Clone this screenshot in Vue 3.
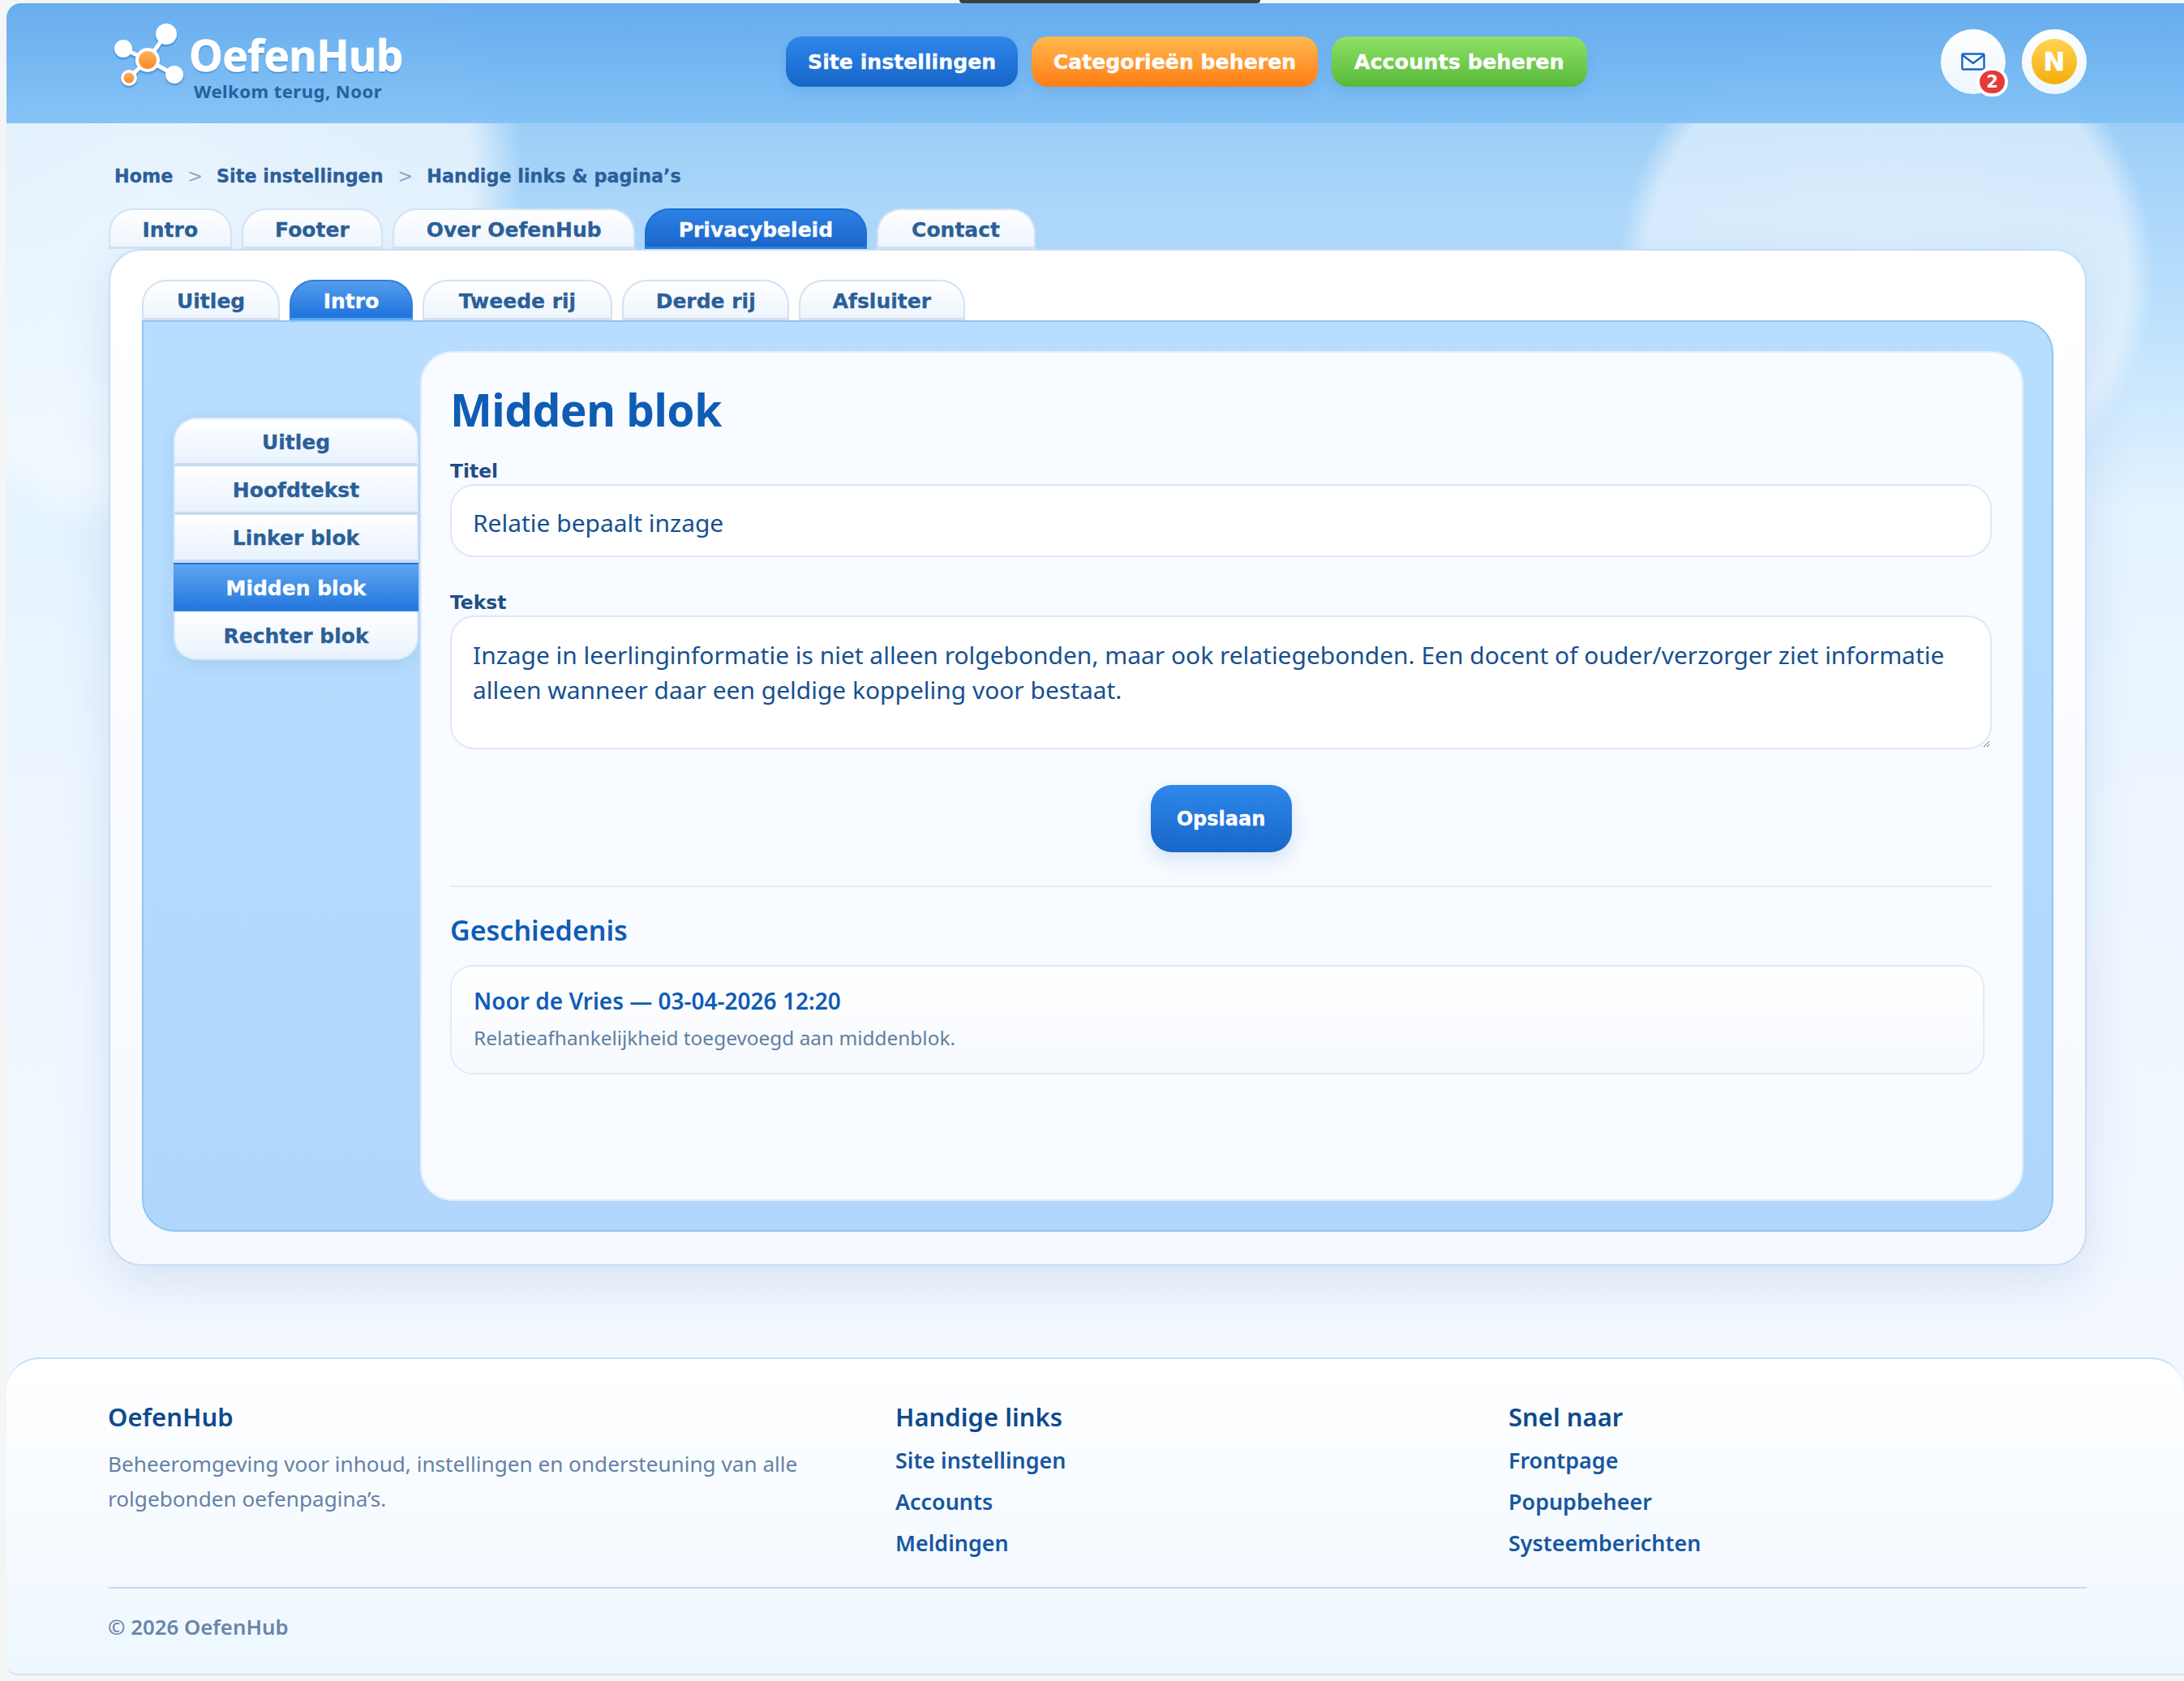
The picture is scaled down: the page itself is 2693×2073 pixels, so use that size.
<template>
  <div class="notch"></div>
  <div class="page">
    <header class="topbar">
      <div class="brand">
        <svg class="logo" viewBox="0 0 90 90" width="90" height="90">
          <g class="logo-lines" stroke="#fff" stroke-width="5">
            <line x1="42" y1="50" x2="65" y2="18" />
            <line x1="42" y1="50" x2="12" y2="36" />
            <line x1="42" y1="50" x2="19" y2="72" />
            <line x1="42" y1="50" x2="75" y2="68" />
          </g>
          <circle cx="65" cy="18" r="13" fill="#fff" />
          <circle cx="12" cy="36" r="11" fill="#fff" />
          <circle cx="75" cy="68" r="11" fill="#fff" />
          <circle cx="42" cy="50" r="15" fill="#fff" />
          <circle cx="42" cy="50" r="11" fill="url(#oranje)" />
          <circle cx="19" cy="72" r="10" fill="#fff" />
          <circle cx="19" cy="72" r="6.5" fill="url(#oranje)" />
          <defs>
            <linearGradient id="oranje" x1="0" y1="0" x2="0" y2="1">
              <stop offset="0" stop-color="#ffb25c" />
              <stop offset="1" stop-color="#f98a24" />
            </linearGradient>
          </defs>
        </svg>
        <div class="brand-text">
          <div class="brand-name">OefenHub</div>
          <div class="brand-sub">Welkom terug, Noor</div>
        </div>
      </div>

      <nav class="mainnav">
        <a v-for="b in navButtons" :key="b.label" class="navbtn" :class="b.kind">{{ b.label }}</a>
      </nav>

      <div class="userbox">
        <div class="roundbtn">
          <svg width="30" height="22" viewBox="0 0 30 22" fill="none" stroke="#1766c2" stroke-width="2.4">
            <rect x="1.5" y="1.5" width="27" height="19" rx="1.5" />
            <path d="M2 3l13 10L28 3" />
          </svg>
          <span class="badge">2</span>
        </div>
        <div class="roundbtn">
          <span class="avatar">N</span>
        </div>
      </div>
    </header>

    <main class="content">
      <div class="crumbs">
        <a>Home</a>
        <span class="sep">&gt;</span>
        <a>Site instellingen</a>
        <span class="sep">&gt;</span>
        <a>Handige links &amp; pagina’s</a>
      </div>

      <div class="tabs toptabs">
        <button v-for="t in topTabs" :key="t" class="tab" :class="{ 'tab-strong': t === 'Privacybeleid' }">{{ t }}</button>
      </div>

      <section class="card">
        <div class="tabs subtabs">
          <button v-for="t in subTabs" :key="t" class="tab" :class="{ 'tab-active': t === 'Intro' }">{{ t }}</button>
        </div>

        <div class="panel">
          <aside class="sidemenu">
            <button v-for="s in sideItems" :key="s" class="sideitem" :class="{ active: s === 'Midden blok' }">{{ s }}</button>
          </aside>

          <div class="editor">
            <h1>Midden blok</h1>

            <label class="field-label">Titel</label>
            <input class="field" type="text" value="Relatie bepaalt inzage" />

            <label class="field-label second">Tekst</label>
            <textarea class="field area" :value="bodyText"></textarea>

            <div class="actions">
              <button class="savebtn">Opslaan</button>
            </div>

            <hr />

            <h2>Geschiedenis</h2>
            <div class="history">
              <div class="history-head">Noor de Vries — 03-04-2026 12:20</div>
              <div class="history-note">Relatieafhankelijkheid toegevoegd aan middenblok.</div>
            </div>
          </div>
        </div>
      </section>
    </main>

    <footer class="foot">
      <div class="foot-cols">
        <div class="foot-about">
          <h3>OefenHub</h3>
          <p>Beheeromgeving voor inhoud, instellingen en ondersteuning van alle rolgebonden oefenpagina’s.</p>
        </div>
        <div class="foot-col" v-for="col in footCols" :key="col.title">
          <h3>{{ col.title }}</h3>
          <a v-for="l in col.links" :key="l">{{ l }}</a>
        </div>
      </div>
      <div class="foot-bottom">© 2026 OefenHub</div>
    </footer>
  </div>
</template>

<script setup>
const navButtons = [
  { label: 'Site instellingen', kind: 'blue' },
  { label: 'Categorieën beheren', kind: 'orange' },
  { label: 'Accounts beheren', kind: 'green' }
]

const topTabs = ['Intro', 'Footer', 'Over OefenHub', 'Privacybeleid', 'Contact']
const subTabs = ['Uitleg', 'Intro', 'Tweede rij', 'Derde rij', 'Afsluiter']
const sideItems = ['Uitleg', 'Hoofdtekst', 'Linker blok', 'Midden blok', 'Rechter blok']

const bodyText = 'Inzage in leerlinginformatie is niet alleen rolgebonden, maar ook relatiegebonden. Een docent of ouder/verzorger ziet informatie alleen wanneer daar een geldige koppeling voor bestaat.'

const footCols = [
  { title: 'Handige links', links: ['Site instellingen', 'Accounts', 'Meldingen'] },
  { title: 'Snel naar', links: ['Frontpage', 'Popupbeheer', 'Systeemberichten'] }
]
</script>

<style>
html, body {
  margin: 0;
  background: #f4f5f6;
}
</style>

<style scoped>
.notch {
  position: absolute;
  left: 1183px;
  top: 0;
  width: 371px;
  height: 4px;
  background: #3c4043;
  border-radius: 0 0 10px 10px;
  z-index: 5;
}

.page {
  position: relative;
  margin: 4px 0 0 8px;
  height: 2062px;
  border-radius: 18px 0 0 14px;
  overflow: hidden;
  font-family: "Noto Sans", sans-serif;
  background:
    radial-gradient(circle 330px at 2318px 332px, rgba(255,255,255,.55) 0, rgba(255,255,255,.5) 90%, rgba(255,255,255,0) 100%),
    radial-gradient(circle 450px at 186px 209px, rgba(255,255,255,.75) 0, rgba(255,255,255,.66) 86%, rgba(255,255,255,0) 100%),
    linear-gradient(180deg, #80bff3 0, #9dcef7 148px, #bfe2fd 400px, #e4f3ff 620px, #eef6ff 1000px, #f3f8ff 1670px);
}

/* topbar */
.topbar {
  height: 148px;
  display: flex;
  align-items: flex-start;
  padding: 0 120px 0 132px;
  box-sizing: border-box;
  background: linear-gradient(180deg, rgba(102,172,237,.98), rgba(128,192,246,.94));
  border-bottom: 1px solid #8cc4f3;
}

.brand {
  display: flex;
  align-items: flex-start;
  width: 829px;
  padding-top: 20px;
}

.logo {
  flex: none;
  filter: drop-shadow(0 2px 1px rgba(38,120,200,.7));
}

.brand-text {
  margin-left: 3px;
}

.brand-name {
  font-size: 53px;
  font-weight: 700;
  line-height: 60px;
  margin-top: 14px;
  color: #fff;
  letter-spacing: -.6px;
  -webkit-text-stroke: .6px #fff;
  text-shadow: 0 2px 1px #3f91d8;
}

.brand-sub {
  margin: 0 0 0 6px;
  font-size: 22.2px;
  font-weight: 700;
  line-height: 30px;
  color: #26609f;
  letter-spacing: .4px;
}

.mainnav {
  display: flex;
  gap: 16.5px;
  margin-top: 41px;
}

.navbtn {
  height: 62px;
  padding: 0 27px;
  border-radius: 20px;
  font: 700 25.2px/63px "DejaVu Sans", sans-serif;
  -webkit-text-stroke: .35px currentColor;
  color: #fff;
  white-space: nowrap;
  box-shadow: 0 6px 14px rgba(40,110,190,.14);
}

.navbtn.blue { background: linear-gradient(180deg, #2f87ea, #1765c9); }
.navbtn.orange { background: linear-gradient(180deg, #ffb84f, #ff7d14); }
.navbtn.green {
  padding: 0 28px;
  font-size: 25.5px;
  background: linear-gradient(180deg, #8ee067, #58b939);
}

.userbox {
  margin-left: auto;
  margin-top: 32px;
  display: flex;
  gap: 20px;
}

.roundbtn {
  position: relative;
  width: 80px;
  height: 80px;
  border-radius: 50%;
  background: linear-gradient(180deg, #fff, #eef6fe);
  display: flex;
  align-items: center;
  justify-content: center;
}

.badge {
  position: absolute;
  left: 44px;
  top: 47px;
  width: 31px;
  height: 28px;
  border: 4px solid #fff;
  border-radius: 18px;
  background: #e53a3c;
  color: #fff;
  font: 700 21px/28px "DejaVu Sans", sans-serif;
  text-align: center;
}

.avatar {
  width: 56px;
  height: 56px;
  border-radius: 50%;
  background: linear-gradient(180deg, #ffd352, #f4ad0c);
  color: #fff;
  font: 700 32px/56px "DejaVu Sans", sans-serif;
  -webkit-text-stroke: .5px currentColor;
  text-align: center;
}

/* main */
.content {
  padding: 0 120px 0 126px;
}

.crumbs {
  display: flex;
  align-items: center;
  height: 40px;
  margin: 45px 0 20px 7px;
  font: 700 22.3px/40px "DejaVu Sans", sans-serif;
  -webkit-text-stroke: .3px currentColor;
  color: #2b5f98;
}

.sep {
  margin: 0 17px 0 18px;
  font-weight: 400;
  -webkit-text-stroke: 0;
  color: #8aa7c6;
}

.tabs {
  display: flex;
  gap: 12px;
}

.tab {
  height: 50px;
  padding: 3px 39.5px 0;
  border: 2px solid #d2e2f3;
  border-bottom: 3px solid #d3e0ef;
  border-radius: 30px 30px 0 0;
  background: linear-gradient(180deg, #fff, #eef5fe);
  font: 700 25px/44px "DejaVu Sans", sans-serif;
  -webkit-text-stroke: .3px currentColor;
  color: #2b5f98;
  white-space: nowrap;
  box-sizing: border-box;
}

.toptabs .tab:last-child {
  padding: 3px 41.5px 0;
}

.subtabs .tab:first-child {
  padding: 3px 41px 0;
}

.subtabs .tab:nth-child(3) {
  padding: 3px 43px 0;
}

.tab-strong {
  border-color: #1c6fd4;
  border-bottom-color: #2a7fe2;
  background: linear-gradient(180deg, #2d82e6, #1a65ca);
  color: #fff;
}

.tab-active {
  border-color: #2f80e2;
  border-bottom-color: #5aa6f0;
  background: linear-gradient(180deg, #539dee, #1f72dc);
  color: #fff;
}

.card {
  padding: 36px 39px 40px;
  border: 2px solid #c7ddf5;
  border-radius: 40px;
  background: linear-gradient(180deg, #fff 0, #f5f9ff 100%);
  box-shadow: 0 20px 60px rgba(60,120,190,.16);
}

.panel {
  display: flex;
  align-items: flex-start;
  gap: 2px;
  padding: 36px 35px 36px 37px;
  border: 2px solid #8ec5f3;
  border-radius: 0 40px 40px 40px;
  background: linear-gradient(180deg, #b8deff, #b0d7fb);
}

.sidemenu {
  flex: none;
  width: 302px;
  margin-top: 82px;
  display: flex;
  flex-direction: column;
  border-radius: 28px;
  box-shadow: 0 4px 20px rgba(60,120,190,.14);
}

.sideitem {
  height: 59.8px;
  padding: 4px 0 0;
  border: 0;
  border-left: 2px solid #dfeaf6;
  border-right: 2px solid #dfeaf6;
  border-bottom: 4px solid #cbdbee;
  background: linear-gradient(180deg, #fff, #e9f3fe);
  font: 700 25px/50px "DejaVu Sans", sans-serif;
  -webkit-text-stroke: .3px currentColor;
  color: #2b5f98;
}

.sideitem:first-child {
  border-top: 2px solid #dfeaf6;
  border-radius: 28px 28px 0 0;
}

.sideitem:last-child {
  border-bottom: 2px solid #dbe7f4;
  border-radius: 0 0 28px 28px;
}

.sideitem.active {
  border: 0;
  border-top: 2px solid #1f72dc;
  border-bottom: 3px solid #2a7fe2;
  background: linear-gradient(180deg, #5fa5f0, #2478de);
  color: #fff;
}

.editor {
  flex: 1;
  min-width: 0;
  padding: 0 37px 154px 35px;
  border: 2px solid #e3edf8;
  border-radius: 40px;
  background: #f8fbff;
}

h1 {
  margin: 34px 0 0;
  font-size: 55px;
  font-weight: 700;
  line-height: 72px;
  letter-spacing: -.5px;
  color: #0f5cb5;
}

.field-label {
  display: block;
  margin-top: 24px;
  font: 700 23.4px/32px "DejaVu Sans", sans-serif;
  color: #1f4e85;
}

.field-label.second {
  margin-top: 40px;
}

.field {
  display: block;
  width: 100%;
  height: 90px;
  box-sizing: border-box;
  padding: 5px 26px 0;
  border: 2px solid #dfe8f5;
  border-radius: 30px;
  background: #fff;
  font: 400 29.95px/43px "Noto Sans", sans-serif;
  color: #17508f;
  outline: none;
}

.field.area {
  height: 165px;
  padding: 25px 26px 0;
}

.actions {
  display: flex;
  justify-content: center;
  margin-top: 44px;
}

.savebtn {
  width: 174px;
  height: 83px;
  border: 0;
  border-radius: 26px;
  background: linear-gradient(180deg, #3088ea, #1766ca);
  box-shadow: 0 10px 22px rgba(40,110,190,.16);
  font: 700 24px/83px "DejaVu Sans", sans-serif;
  -webkit-text-stroke: .3px currentColor;
  color: #fff;
}

hr {
  margin: 41px 0 0;
  border: 0;
  border-top: 2px solid #e3ebf5;
}

h2 {
  margin: 30px 0 0;
  font-size: 34px;
  font-weight: 600;
  line-height: 46px;
  color: #0f5cb5;
}

.history {
  width: calc(100% - 9px);
  box-sizing: border-box;
  margin-top: 20px;
  padding: 21px 27px 0;
  height: 135px;
  border: 2px solid #e3ebf5;
  border-radius: 28px;
  background: linear-gradient(180deg, #fff, #f6f9fe);
}

.history-head {
  font-size: 28px;
  font-weight: 600;
  line-height: 42px;
  color: #0f5cb5;
}

.history-note {
  margin-top: 6px;
  font-size: 24.4px;
  line-height: 38px;
  color: #5d7fa3;
}

/* footer */
.foot {
  position: absolute;
  left: 0;
  right: 0;
  top: 1670px;
  height: 392px;
  box-sizing: border-box;
  padding: 49px 120px 0 125px;
  border-top: 2px solid #c5def6;
  border-bottom: 2px solid #d9e2ea;
  border-radius: 40px 40px 0 14px;
  background: linear-gradient(180deg, #fff, #eef7ff);
}

.foot-cols {
  display: flex;
  height: 232px;
  border-bottom: 2px solid #c5dcf5;
}

.foot-about {
  width: 971px;
}

.foot-col {
  width: 756px;
  display: flex;
  flex-direction: column;
}

.foot-col + .foot-col {
  width: auto;
}

h3 {
  margin: 0;
  font-size: 31px;
  font-weight: 600;
  line-height: 44px;
  color: #0e4a8e;
}

.foot-about p {
  width: 880px;
  margin: 15px 0 0;
  font-size: 26.15px;
  line-height: 43px;
  color: #6482a6;
}

.foot-col a {
  margin-top: 6px;
  font-size: 26.9px;
  font-weight: 600;
  line-height: 45px;
  color: #17579f;
}

.foot-col a:first-of-type {
  margin-top: 9px;
}

.foot-bottom {
  margin-top: 27px;
  font-size: 25.8px;
  font-weight: 600;
  line-height: 40px;
  color: #6a85ab;
}
</style>
